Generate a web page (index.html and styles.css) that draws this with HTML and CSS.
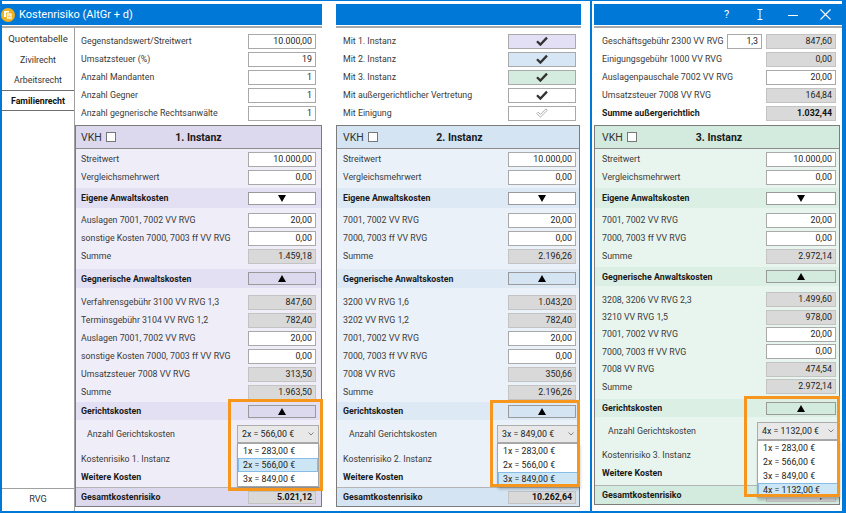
FILE: index.html
```html
<!DOCTYPE html>
<html lang="de">
<head>
    <meta charset="UTF-8">
    <meta name="viewport" content="width=device-width, initial-scale=1.0">
    <title>Kostenrisiko</title>
    <link rel="stylesheet" href="styles.css">
</head>
<body>
<div class="screen">

    <!-- linkes Fenster: Navigation + 1. Instanz -->
    <div class="win win-left">
        <div class="titlebar">
            <svg class="app-icon" width="14" height="14" viewBox="0 0 14 14">
                <circle cx="7" cy="7" r="7" fill="#f1b11f"/>
                <rect x="3" y="3" width="5" height="6" fill="#fff"/>
                <rect x="5.5" y="5" width="5.5" height="6.5" fill="#fff" stroke="#f1b11f" stroke-width="0.8"/>
                <path d="M6.7 7h3.2M6.7 8.5h3.2M6.7 10h3.2" stroke="#f1b11f" stroke-width="0.6"/>
            </svg>
            <span class="title">Kostenrisiko (AltGr + d)</span>
        </div>
        <div class="win-body">
            <div class="sidebar">
                <div class="tab big">Quotentabelle</div>
                <div class="tab">Zivilrecht</div>
                <div class="tab short">Arbeitsrecht</div>
                <div class="tab active">Familienrecht</div>
                <div class="tab rvg">RVG</div>
            </div>
            <div class="content">
                <div class="form">
                    <div class="frow"><span class="lbl">Gegenstandswert/Streitwert</span><span class="box">10.000,00</span></div>
                    <div class="frow"><span class="lbl">Umsatzsteuer (%)</span><span class="box">19</span></div>
                    <div class="frow"><span class="lbl">Anzahl Mandanten</span><span class="box">1</span></div>
                    <div class="frow"><span class="lbl">Anzahl Gegner</span><span class="box">1</span></div>
                    <div class="frow"><span class="lbl">Anzahl gegnerische Rechtsanwälte</span><span class="box">1</span></div>
                </div>
                <div class="instanz i1">
                    <div class="ihead"><span class="vkh">VKH <i class="cb"></i></span><b class="ititle">1. Instanz</b><span></span></div>
                    <div class="row first"><span class="lbl">Streitwert</span><span class="box">10.000,00</span></div>
                    <div class="row"><span class="lbl">Vergleichsmehrwert</span><span class="box">0,00</span></div>
                    <div class="band b1"><b class="lbl">Eigene Anwaltskosten</b><span class="btn"><svg width="8" height="7" viewBox="0 0 8 7"><path d="M0 0h8L4 7z"/></svg></span></div>
                    <div class="row gap3"><span class="lbl">Auslagen 7001, 7002 VV RVG</span><span class="box">20,00</span></div>
                    <div class="row"><span class="lbl">sonstige Kosten 7000, 7003 ff VV RVG</span><span class="box">0,00</span></div>
                    <div class="row"><span class="lbl">Summe</span><span class="box ro">1.459,18</span></div>
                    <div class="band b2"><b class="lbl">Gegnerische Anwaltskosten</b><span class="btn tint"><svg width="8" height="7" viewBox="0 0 8 7"><path d="M0 7h8L4 0z"/></svg></span></div>
                    <div class="row gap5"><span class="lbl">Verfahrensgebühr 3100 VV RVG 1,3</span><span class="box ro">847,60</span></div>
                    <div class="row"><span class="lbl">Terminsgebühr 3104 VV RVG 1,2</span><span class="box ro">782,40</span></div>
                    <div class="row"><span class="lbl">Auslagen 7001, 7002 VV RVG</span><span class="box">20,00</span></div>
                    <div class="row"><span class="lbl">sonstige Kosten 7000, 7003 ff VV RVG</span><span class="box">0,00</span></div>
                    <div class="row"><span class="lbl">Umsatzsteuer 7008 VV RVG</span><span class="box ro">313,50</span></div>
                    <div class="row"><span class="lbl">Summe</span><span class="box ro">1.963,50</span></div>
                    <div class="band b3"><b class="lbl">Gerichtskosten</b><span class="btn tint"><svg width="8" height="7" viewBox="0 0 8 7"><path d="M0 7h8L4 0z"/></svg></span></div>
                    <div class="row anzahl">
                        <span class="lbl">Anzahl Gerichtskosten</span>
                        <div class="select">
                            <span>2x = 566,00 €</span>
                            <svg width="6" height="4" viewBox="0 0 6 4"><path d="M0.5 0.5L3 3l2.5-2.5" fill="none" stroke="#777" stroke-width="0.9"/></svg>
                            <div class="dd-list">
                                <div class="dd-item">1x = 283,00 €</div>
                                <div class="dd-item sel">2x = 566,00 €</div>
                                <div class="dd-item">3x = 849,00 €</div>
                            </div>
                        </div>
                    </div>
                    <div class="row gap6"><span class="lbl">Kostenrisiko 1. Instanz</span><span class="box ro">3.988,68</span></div>
                    <div class="row"><b class="lbl">Weitere Kosten</b></div>
                    <div class="total"><b class="lbl">Gesamtkostenrisiko</b><span class="box ro strong">5.021,12</span></div>
                    <div class="mark mark-1"></div>
                </div>
            </div>
        </div>
    </div>

    <!-- mittleres Fenster: 2. Instanz -->
    <div class="win win-mid">
        <div class="titlebar"></div>
        <div class="win-body">
            <div class="content">
                <div class="form">
                    <div class="frow"><span class="lbl">Mit 1. Instanz</span><span class="chk c1"><svg width="12" height="10" viewBox="0 0 12 10"><path d="M1 5.2l3.4 3.4L11 1.6" fill="none" stroke="#333" stroke-width="2.3"/></svg></span></div>
                    <div class="frow"><span class="lbl">Mit 2. Instanz</span><span class="chk c2"><svg width="12" height="10" viewBox="0 0 12 10"><path d="M1 5.2l3.4 3.4L11 1.6" fill="none" stroke="#333" stroke-width="2.3"/></svg></span></div>
                    <div class="frow"><span class="lbl">Mit 3. Instanz</span><span class="chk c3"><svg width="12" height="10" viewBox="0 0 12 10"><path d="M1 5.2l3.4 3.4L11 1.6" fill="none" stroke="#333" stroke-width="2.3"/></svg></span></div>
                    <div class="frow"><span class="lbl">Mit außergerichtlicher Vertretung</span><span class="chk"><svg width="12" height="10" viewBox="0 0 12 10"><path d="M1 5.2l3.4 3.4L11 1.6" fill="none" stroke="#333" stroke-width="2.3"/></svg></span></div>
                    <div class="frow"><span class="lbl">Mit Einigung</span><span class="chk"><svg width="12" height="11" viewBox="0 0 12 11"><path d="M0.8 5.6l1.4-1.4 2.2 2.2L9.9 0.9l1.4 1.4-6.9 6.9z" fill="#fff" stroke="#9a9a9a" stroke-width="0.8"/></svg></span></div>
                </div>
                <div class="instanz i2">
                    <div class="ihead"><span class="vkh">VKH <i class="cb"></i></span><b class="ititle">2. Instanz</b><span></span></div>
                    <div class="row first"><span class="lbl">Streitwert</span><span class="box">10.000,00</span></div>
                    <div class="row"><span class="lbl">Vergleichsmehrwert</span><span class="box">0,00</span></div>
                    <div class="band b1"><b class="lbl">Eigene Anwaltskosten</b><span class="btn"><svg width="8" height="7" viewBox="0 0 8 7"><path d="M0 0h8L4 7z"/></svg></span></div>
                    <div class="row gap3"><span class="lbl">7001, 7002 VV RVG</span><span class="box">20,00</span></div>
                    <div class="row"><span class="lbl">7000, 7003 ff VV RVG</span><span class="box">0,00</span></div>
                    <div class="row"><span class="lbl">Summe</span><span class="box ro">2.196,26</span></div>
                    <div class="band b2"><b class="lbl">Gegnerische Anwaltskosten</b><span class="btn tint"><svg width="8" height="7" viewBox="0 0 8 7"><path d="M0 7h8L4 0z"/></svg></span></div>
                    <div class="row gap5"><span class="lbl">3200 VV RVG 1,6</span><span class="box ro">1.043,20</span></div>
                    <div class="row"><span class="lbl">3202 VV RVG 1,2</span><span class="box ro">782,40</span></div>
                    <div class="row"><span class="lbl">7001, 7002 VV RVG</span><span class="box">20,00</span></div>
                    <div class="row"><span class="lbl">7000, 7003 ff VV RVG</span><span class="box">0,00</span></div>
                    <div class="row"><span class="lbl">7008 VV RVG</span><span class="box ro">350,66</span></div>
                    <div class="row"><span class="lbl">Summe</span><span class="box ro">2.196,26</span></div>
                    <div class="band b3"><b class="lbl">Gerichtskosten</b><span class="btn tint"><svg width="8" height="7" viewBox="0 0 8 7"><path d="M0 7h8L4 0z"/></svg></span></div>
                    <div class="row anzahl">
                        <span class="lbl">Anzahl Gerichtskosten</span>
                        <div class="select">
                            <span>3x = 849,00 €</span>
                            <svg width="6" height="4" viewBox="0 0 6 4"><path d="M0.5 0.5L3 3l2.5-2.5" fill="none" stroke="#777" stroke-width="0.9"/></svg>
                            <div class="dd-list">
                                <div class="dd-item">1x = 283,00 €</div>
                                <div class="dd-item">2x = 566,00 €</div>
                                <div class="dd-item sel">3x = 849,00 €</div>
                            </div>
                        </div>
                    </div>
                    <div class="row gap6"><span class="lbl">Kostenrisiko 2. Instanz</span><span class="box ro">5.241,52</span></div>
                    <div class="row"><b class="lbl">Weitere Kosten</b></div>
                    <div class="total"><b class="lbl">Gesamtkostenrisiko</b><span class="box ro strong">10.262,64</span></div>
                    <div class="mark mark-2"></div>
                </div>
            </div>
        </div>
    </div>

    <!-- rechtes Fenster: außergerichtlich + 3. Instanz -->
    <div class="win win-right">
        <div class="titlebar tb-right">
            <span class="tbtn help">?</span>
            <span class="tbtn"><svg width="8" height="11" viewBox="0 0 8 11"><path d="M1.5 0.5h5M4 0.5v10M1.5 10.5h5" fill="none" stroke="#fff" stroke-width="1"/></svg></span>
            <span class="tbtn"><svg width="10" height="10" viewBox="0 0 10 10"><path d="M0 5.5h10" stroke="#fff" stroke-width="1"/></svg></span>
            <span class="tbtn"><svg width="11" height="11" viewBox="0 0 11 11"><path d="M0.5 0.5l10 10M10.5 0.5l-10 10" stroke="#fff" stroke-width="1.1"/></svg></span>
        </div>
        <div class="win-body">
            <div class="content">
                <div class="form">
                    <div class="frow"><span class="lbl">Geschäftsgebühr 2300 VV RVG</span><span class="box small">1,3</span><span class="box ro">847,60</span></div>
                    <div class="frow"><span class="lbl">Einigungsgebühr 1000 VV RVG</span><span class="box ro">0,00</span></div>
                    <div class="frow"><span class="lbl">Auslagenpauschale 7002 VV RVG</span><span class="box">20,00</span></div>
                    <div class="frow"><span class="lbl">Umsatzsteuer 7008 VV RVG</span><span class="box ro">164,84</span></div>
                    <div class="frow"><b class="lbl">Summe außergerichtlich</b><span class="box ro strong">1.032,44</span></div>
                </div>
                <div class="instanz i3">
                    <div class="ihead"><span class="vkh">VKH <i class="cb"></i></span><b class="ititle">3. Instanz</b><span></span></div>
                    <div class="row first"><span class="lbl">Streitwert</span><span class="box">10.000,00</span></div>
                    <div class="row"><span class="lbl">Vergleichsmehrwert</span><span class="box">0,00</span></div>
                    <div class="band b1"><b class="lbl">Eigene Anwaltskosten</b><span class="btn"><svg width="8" height="7" viewBox="0 0 8 7"><path d="M0 0h8L4 7z"/></svg></span></div>
                    <div class="row gap3"><span class="lbl">7001, 7002 VV RVG</span><span class="box">20,00</span></div>
                    <div class="row"><span class="lbl">7000, 7003 ff VV RVG</span><span class="box">0,00</span></div>
                    <div class="row"><span class="lbl">Summe</span><span class="box ro">2.972,14</span></div>
                    <div class="band b2"><b class="lbl">Gegnerische Anwaltskosten</b><span class="btn tint"><svg width="8" height="7" viewBox="0 0 8 7"><path d="M0 7h8L4 0z"/></svg></span></div>
                    <div class="row gap5 tight"><span class="lbl">3208, 3206 VV RVG 2,3</span><span class="box ro">1.499,60</span></div>
                    <div class="row tight"><span class="lbl">3210 VV RVG 1,5</span><span class="box ro">978,00</span></div>
                    <div class="row tight"><span class="lbl">7001, 7002 VV RVG</span><span class="box">20,00</span></div>
                    <div class="row tight"><span class="lbl">7000, 7003 ff VV RVG</span><span class="box">0,00</span></div>
                    <div class="row tight"><span class="lbl">7008 VV RVG</span><span class="box ro">474,54</span></div>
                    <div class="row tight"><span class="lbl">Summe</span><span class="box ro">2.972,14</span></div>
                    <div class="band b3"><b class="lbl">Gerichtskosten</b><span class="btn tint"><svg width="8" height="7" viewBox="0 0 8 7"><path d="M0 7h8L4 0z"/></svg></span></div>
                    <div class="row anzahl">
                        <span class="lbl">Anzahl Gerichtskosten</span>
                        <div class="select">
                            <span>4x = 1132,00 €</span>
                            <svg width="6" height="4" viewBox="0 0 6 4"><path d="M0.5 0.5L3 3l2.5-2.5" fill="none" stroke="#777" stroke-width="0.9"/></svg>
                            <div class="dd-list">
                                <div class="dd-item">1x = 283,00 €</div>
                                <div class="dd-item">2x = 566,00 €</div>
                                <div class="dd-item">3x = 849,00 €</div>
                                <div class="dd-item sel">4x = 1132,00 €</div>
                            </div>
                        </div>
                    </div>
                    <div class="row gap6"><span class="lbl">Kostenrisiko 3. Instanz</span><span class="box ro">7.076,28</span></div>
                    <div class="row"><b class="lbl">Weitere Kosten</b></div>
                    <div class="total"><b class="lbl">Gesamtkostenrisiko</b><span class="box ro strong">17.338,92</span></div>
                    <div class="mark mark-3"></div>
                </div>
            </div>
        </div>
    </div>

</div>
</body>
</html>
```

FILE: styles.css
```css
* {
    box-sizing: border-box;
}

body {
    margin: 0;
    background: #fff;
    font-family: Roboto, "Noto Sans", sans-serif;
    font-size: 8.8px;
    color: #3a3a3a;
}

b {
    color: #1a1a1a;
}

.screen {
    width: 846px;
    height: 513px;
    border-top: 1px solid #0078d7;
    border-bottom: 2px solid #0078d7;
    display: flex;
}

/* Fenster */
.win {
    flex: none;
    display: flex;
    flex-direction: column;
    padding-top: 3px;
}

.win-left {
    width: 322px;
    border-left: 2px solid #0078d7;
}

.win-mid {
    width: 245px;
    margin-left: 14px;
}

.win-right {
    width: 256px;
    margin-left: 9px;
    padding-left: 2px;
    border-left: 2px solid #0078d7;
    border-right: 4px solid #0078d7;
}

.titlebar {
    flex: none;
    height: 21px;
    background: #0078d7;
    color: #fff;
    display: flex;
    align-items: center;
}

.app-icon {
    margin-left: -1px;
}

.title {
    margin-left: 4px;
    font-size: 11px;
}

.tb-right {
    justify-content: flex-end;
}

.tbtn {
    width: 33px;
    display: flex;
    justify-content: center;
    align-items: center;
}

.tbtn.help {
    font-size: 11px;
}

.win-body {
    flex: 1;
    display: flex;
    margin-top: 1px;
    border-top: 2px solid #a9a9a9;
}

/* Navigation links */
.sidebar {
    width: 73px;
    flex: none;
    border-right: 1px solid #a0a0a0;
    display: flex;
    flex-direction: column;
}

.tab {
    height: 21px;
    display: flex;
    align-items: center;
    justify-content: center;
    color: #333;
    white-space: nowrap;
}

.tab.big {
    font-size: 9.6px;
}

.tab.short {
    height: 20px;
}

.tab.active {
    font-weight: bold;
    color: #111;
    border-top: 1px solid #707070;
    border-bottom: 1px solid #707070;
}

.tab.rvg {
    margin-top: auto;
    margin-bottom: 4px;
    height: 19px;
    border-top: 1px solid #a0a0a0;
    font-size: 9.2px;
}

/* Inhalt */
.content {
    flex: 1;
    min-width: 0;
    display: flex;
    flex-direction: column;
    padding-bottom: 4px;
}

.win-mid .content {
    padding-right: 1px;
}

.win-right .content {
    padding-right: 2px;
    padding-bottom: 6px;
}

.form {
    flex: none;
    height: 97px;
    padding: 4px 6px 3px 6px;
}

.win-mid .form {
    padding-left: 7px;
    padding-right: 4px;
}

.win-right .form {
    padding-left: 8px;
    padding-right: 4px;
}

.frow {
    height: 18px;
    display: flex;
    align-items: center;
}

.lbl {
    flex: 1;
    min-width: 0;
    white-space: nowrap;
}

.box {
    flex: none;
    width: 68px;
    height: 15px;
    border: 1px solid #a9a9a9;
    background: #fff;
    text-align: right;
    padding-right: 3px;
    line-height: 13px;
    color: #222;
    white-space: nowrap;
}

.box.ro {
    background: #d9d9d9;
    border-color: #c3c3c3;
}

.box.strong {
    font-weight: bold;
    color: #111;
}

.win-right .box {
    width: 70px;
}

.win-right .box.small {
    width: 35px;
    margin-right: 4px;
}

.chk {
    flex: none;
    width: 68px;
    height: 15px;
    border: 1px solid #a9a9a9;
    background: #fff;
    display: flex;
    align-items: center;
    justify-content: center;
}

.chk.c1 { background: #e3dff4; }
.chk.c2 { background: #d6e6f4; }
.chk.c3 { background: #d4ecdf; }

/* Instanz-Blöcke */
.instanz {
    flex: 1;
    position: relative;
    display: flex;
    flex-direction: column;
    border: 1px solid #7c7c7c;
    background: var(--bg);
}

.i1 { --bg: #efedf8; --band: #e4e0f3; --head: #dcd8ee; --pl: 5px; --pr: 5px; }
.i2 { --bg: #eaf1f9; --band: #dde9f5; --head: #d4e4f2; --pl: 6px; --pr: 3px; }
.i3 { --bg: #e8f5ee; --band: #dcefe4; --head: #d3eade; --pl: 7px; --pr: 3px; }

.ihead,
.row,
.band,
.total {
    display: flex;
    align-items: center;
    padding-left: var(--pl);
    padding-right: var(--pr);
}

.ihead {
    height: 23px;
    display: grid;
    grid-template-columns: 1fr auto 1fr;
    background: var(--head);
    border-bottom: 1px solid #8c8c8c;
}

.vkh {
    display: flex;
    align-items: center;
    color: #333;
    font-size: 10.5px;
}

.cb {
    width: 10px;
    height: 10px;
    margin-left: 4px;
    background: #fff;
    border: 1px solid #777;
}

.ititle {
    font-size: 10.5px;
}

.row {
    height: 18px;
}

.row.first { margin-top: 1px; }
.row.gap3 { margin-top: 3px; }
.row.gap5 { margin-top: 5px; }
.row.gap6 { margin-top: 6px; }
.row.tight { height: 17.4px; }

.band {
    background: var(--band);
}

.band.b1 { height: 20px; margin-top: 2px; }
.band.b2 { height: 19px; margin-top: 4px; }
.band.b3 { height: 18px; margin-top: 1px; }

.i3 .band.b2 { margin-top: 2px; }
.i3 .band.b3 { margin-top: 4px; }
.i3 .row.gap6 { margin-top: 5px; }

.btn {
    flex: none;
    width: 68px;
    height: 13px;
    border: 1px solid #9a9a9a;
    background: #fff;
    display: flex;
    align-items: center;
    justify-content: center;
}

.win-right .btn {
    width: 70px;
}

.btn.tint {
    background: var(--head);
}

.row.anzahl {
    height: 20px;
    margin-top: 4px;
}

.row.anzahl .lbl {
    padding-left: 6px;
}

.select {
    flex: none;
    position: relative;
    width: 82px;
    height: 18px;
    margin-right: -3px;
    border: 1px solid #acacac;
    background: #e8e8e8;
    display: flex;
    align-items: center;
    justify-content: space-between;
    padding: 0 4px;
    color: #222;
    white-space: nowrap;
}

.dd-list {
    position: absolute;
    left: -1px;
    top: 17px;
    width: 82px;
    background: #fff;
    border: 1px solid #a5a5a5;
    box-shadow: 1px 2px 3px rgba(0, 0, 0, 0.25);
    z-index: 2;
}

.dd-item {
    height: 14px;
    line-height: 14px;
    padding-left: 4px;
    border: 1px solid transparent;
    border-width: 0 1px;
    color: #222;
}

.dd-item.sel {
    background: #cce6f6;
    border: 1px solid #86bde6;
    line-height: 12px;
}

.total {
    margin-top: auto;
    height: 19px;
    border-top: 1px solid #b4b4b4;
    background: var(--head);
}

.total .box {
    height: 13px;
    line-height: 11px;
}

/* orange Markierung */
.mark {
    position: absolute;
    border: 3px solid #f7961d;
    z-index: 3;
}

.mark-1 { left: 152px; top: 273px; width: 95px; height: 92px; }
.mark-2 { left: 153px; top: 274px; width: 90px; height: 87px; }
.mark-3 { left: 149px; top: 270px; width: 96px; height: 101px; }
```
